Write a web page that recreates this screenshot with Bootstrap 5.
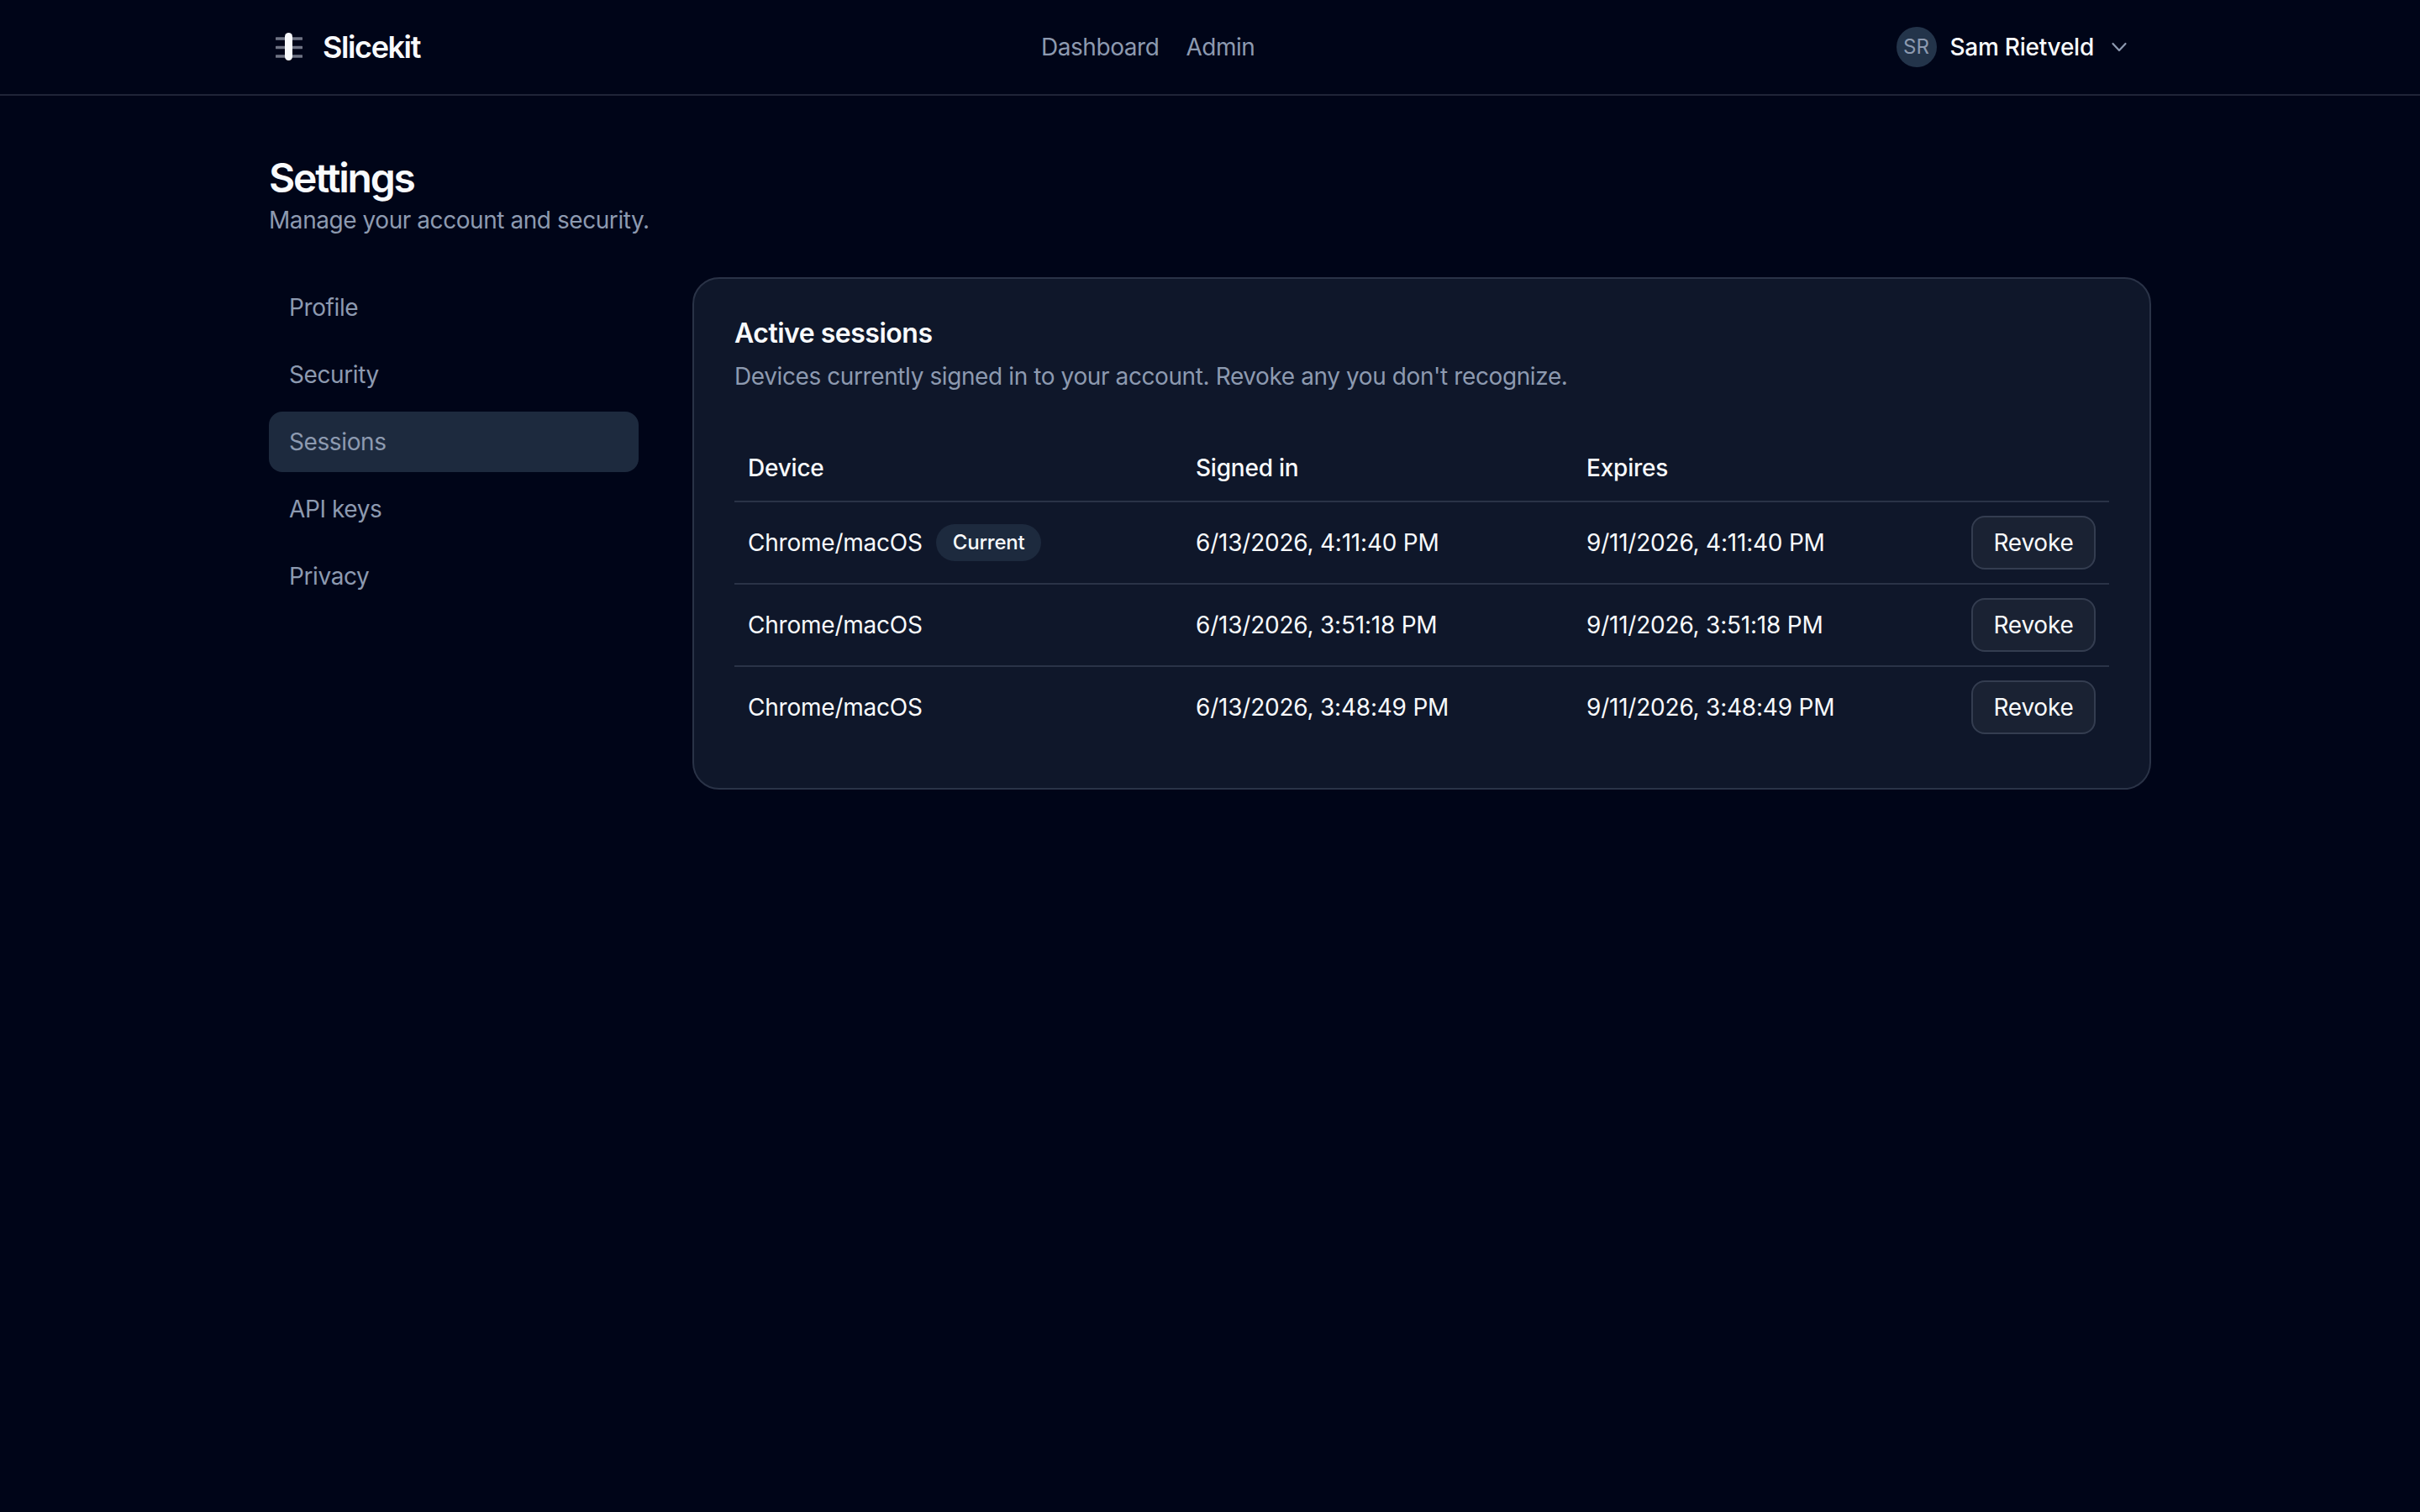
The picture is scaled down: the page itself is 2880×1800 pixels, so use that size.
<!DOCTYPE html>
<html lang="en">
<head>
    <meta charset="UTF-8">
    <meta name="viewport" content="width=device-width, initial-scale=1.0">
    <title>Settings - Slicekit</title>
    <link rel="stylesheet" href="https://cdn.jsdelivr.net/npm/bootstrap@5.3.0/dist/css/bootstrap.min.css">
    <style>
        body {
            background-color: #000518;
            color: #f8fafc;
            font-family: Inter, "Liberation Sans", sans-serif;
            font-size: 28px;
            line-height: 40px;
            min-height: 1800px;
        }
        .top-bar {
            height: 114px;
            border-bottom: 2px solid #1f2538;
        }
        .page-wrap {
            width: 2240px;
            margin: 0 auto;
        }
        .top-inner {
            height: 112px;
        }
        .brand-link {
            color: #f8fafc;
            font-size: 36px;
            font-weight: 600;
            letter-spacing: -1.400px;
            padding-left: 8px;
            gap: 24px;
            text-decoration: none;
        }
        .top-links {
            gap: 32px;
        }
        .top-links .nav-link {
            color: #8d9ab0;
            font-size: 28px;
            letter-spacing: -0.450px;
            padding: 0;
        }
        .user-btn {
            color: #f8fafc;
            font-size: 28px;
            font-weight: 500;
            letter-spacing: -0.250px;
            padding: 8px 24px;
            gap: 16px;
            border: 0;
        }
        .user-btn:hover {
            color: #f8fafc;
        }
        .user-avatar {
            width: 48px;
            height: 48px;
            border-radius: 50%;
            background-color: #23344a;
            color: #8d9ab0;
            font-size: 24px;
            font-weight: 400;
            letter-spacing: 0;
        }
        .page-head {
            padding-top: 70px;
            margin-bottom: 48px;
        }
        .page-head h1 {
            font-size: 48px;
            font-weight: 600;
            letter-spacing: -2.200px;
            line-height: 56px;
            margin: 0 0 2px;
        }
        .muted-line {
            color: #8d9ab0;
            letter-spacing: -0.440px;
            margin: 0;
        }
        .sessions-card .muted-line {
            letter-spacing: -0.400px;
        }
        .side-menu {
            width: 440px;
            gap: 8px;
        }
        .side-menu .nav-link {
            color: #8d9ab0;
            height: 72px;
            letter-spacing: -0.400px;
            padding: 16px 24px;
            border-radius: 16px;
        }
        .side-menu .nav-link.active {
            background-color: #1d2a3e;
            color: #8d9ab0;
        }
        .layout-row {
            gap: 64px;
        }
        .sessions-card {
            background-color: #0f172a;
            border: 2px solid #2a3347;
            border-radius: 32px;
            color: #f8fafc;
        }
        .sessions-card .card-body {
            padding: 48px;
        }
        .sessions-card .card-title {
            font-size: 32px;
            font-weight: 600;
            letter-spacing: -0.500px;
            line-height: 34px;
            margin-bottom: 14px;
        }
        .sessions-table {
            --bs-table-bg: transparent;
            --bs-table-color: #f8fafc;
            --bs-table-border-color: #2a3347;
            table-layout: fixed;
            letter-spacing: -0.220px;
            margin: 49px 0 0;
        }
        .sessions-table th {
            font-weight: 500;
            height: 80px;
            padding: 0 16px;
            vertical-align: middle;
            border-bottom: 2px solid #2a3347;
        }
        .sessions-table td {
            height: 98px;
            padding: 0 16px;
            vertical-align: middle;
            border-bottom: 2px solid #2a3347;
        }
        .sessions-table tbody tr:last-child td {
            height: 97px;
            border-bottom: 0;
        }
        .col-device { width: 533px; }
        .col-signed { width: 465px; }
        .col-expires { width: 360px; }
        .device-cell {
            gap: 16px;
        }
        .current-tag {
            background-color: #1d2a3e;
            color: #f8fafc;
            font-size: 24px;
            font-weight: 500;
            line-height: 32px;
            padding: 6px 20px;
            border-radius: 22px;
        }
        .revoke-btn {
            background-color: #1a2233;
            border: 2px solid #343d50;
            border-radius: 16px;
            color: #f8fafc;
            font-size: 28px;
            line-height: 40px;
            letter-spacing: -0.220px;
            padding: 10px 0;
            width: 148px;
            white-space: nowrap;
        }
    </style>
</head>
<body>
    <!-- Top bar -->
    <header class="top-bar">
        <div class="page-wrap top-inner d-flex align-items-center justify-content-between">
            <a class="brand-link d-flex align-items-center" href="#">
                <svg width="32" height="36" viewBox="0 0 32 36" fill="none" aria-hidden="true">
                    <path d="M1 8h30M1 18.500h30M1 29h30" stroke="#6f7484" stroke-width="3.500" stroke-linecap="round"/>
                    <rect x="11" y="1" width="9" height="33" rx="4.500" fill="#f8fafc"/>
                </svg>
                Slicekit
            </a>
            <ul class="nav top-links">
                <li class="nav-item"><a class="nav-link" href="#">Dashboard</a></li>
                <li class="nav-item"><a class="nav-link" href="#">Admin</a></li>
            </ul>
            <button class="btn user-btn d-flex align-items-center" type="button">
                <span class="user-avatar d-flex align-items-center justify-content-center">SR</span>
                Sam Rietveld
                <svg width="28" height="28" viewBox="0 0 28 28" fill="none" aria-hidden="true">
                    <path d="M6.500 10l7.500 8 7.500-8" stroke="#8d9ab0" stroke-width="2.200" stroke-linecap="round" stroke-linejoin="round"/>
                </svg>
            </button>
        </div>
    </header>

    <main class="page-wrap">
        <div class="page-head">
            <h1>Settings</h1>
            <p class="muted-line">Manage your account and security.</p>
        </div>

        <div class="d-flex align-items-start layout-row">
            <!-- Settings menu -->
            <nav class="nav flex-column side-menu flex-shrink-0">
                <a class="nav-link" href="#">Profile</a>
                <a class="nav-link" href="#">Security</a>
                <a class="nav-link active" href="#">Sessions</a>
                <a class="nav-link" href="#">API keys</a>
                <a class="nav-link" href="#">Privacy</a>
            </nav>

            <!-- Sessions -->
            <div class="card sessions-card flex-grow-1">
                <div class="card-body">
                    <h2 class="card-title">Active sessions</h2>
                    <p class="muted-line">Devices currently signed in to your account. Revoke any you don't recognize.</p>
                    <table class="table sessions-table">
                        <thead>
                            <tr>
                                <th class="col-device">Device</th>
                                <th class="col-signed">Signed in</th>
                                <th class="col-expires">Expires</th>
                                <th></th>
                            </tr>
                        </thead>
                        <tbody>
                            <tr>
                                <td><div class="d-flex align-items-center device-cell">Chrome/macOS <span class="badge current-tag">Current</span></div></td>
                                <td>6/13/2026, 4:11:40 PM</td>
                                <td>9/11/2026, 4:11:40 PM</td>
                                <td class="text-end"><button class="btn revoke-btn" type="button">Revoke</button></td>
                            </tr>
                            <tr>
                                <td>Chrome/macOS</td>
                                <td>6/13/2026, 3:51:18 PM</td>
                                <td>9/11/2026, 3:51:18 PM</td>
                                <td class="text-end"><button class="btn revoke-btn" type="button">Revoke</button></td>
                            </tr>
                            <tr>
                                <td>Chrome/macOS</td>
                                <td>6/13/2026, 3:48:49 PM</td>
                                <td>9/11/2026, 3:48:49 PM</td>
                                <td class="text-end"><button class="btn revoke-btn" type="button">Revoke</button></td>
                            </tr>
                        </tbody>
                    </table>
                </div>
            </div>
        </div>
    </main>

    <script src="https://cdn.jsdelivr.net/npm/bootstrap@5.3.0/dist/js/bootstrap.bundle.min.js"></script>
</body>
</html>
